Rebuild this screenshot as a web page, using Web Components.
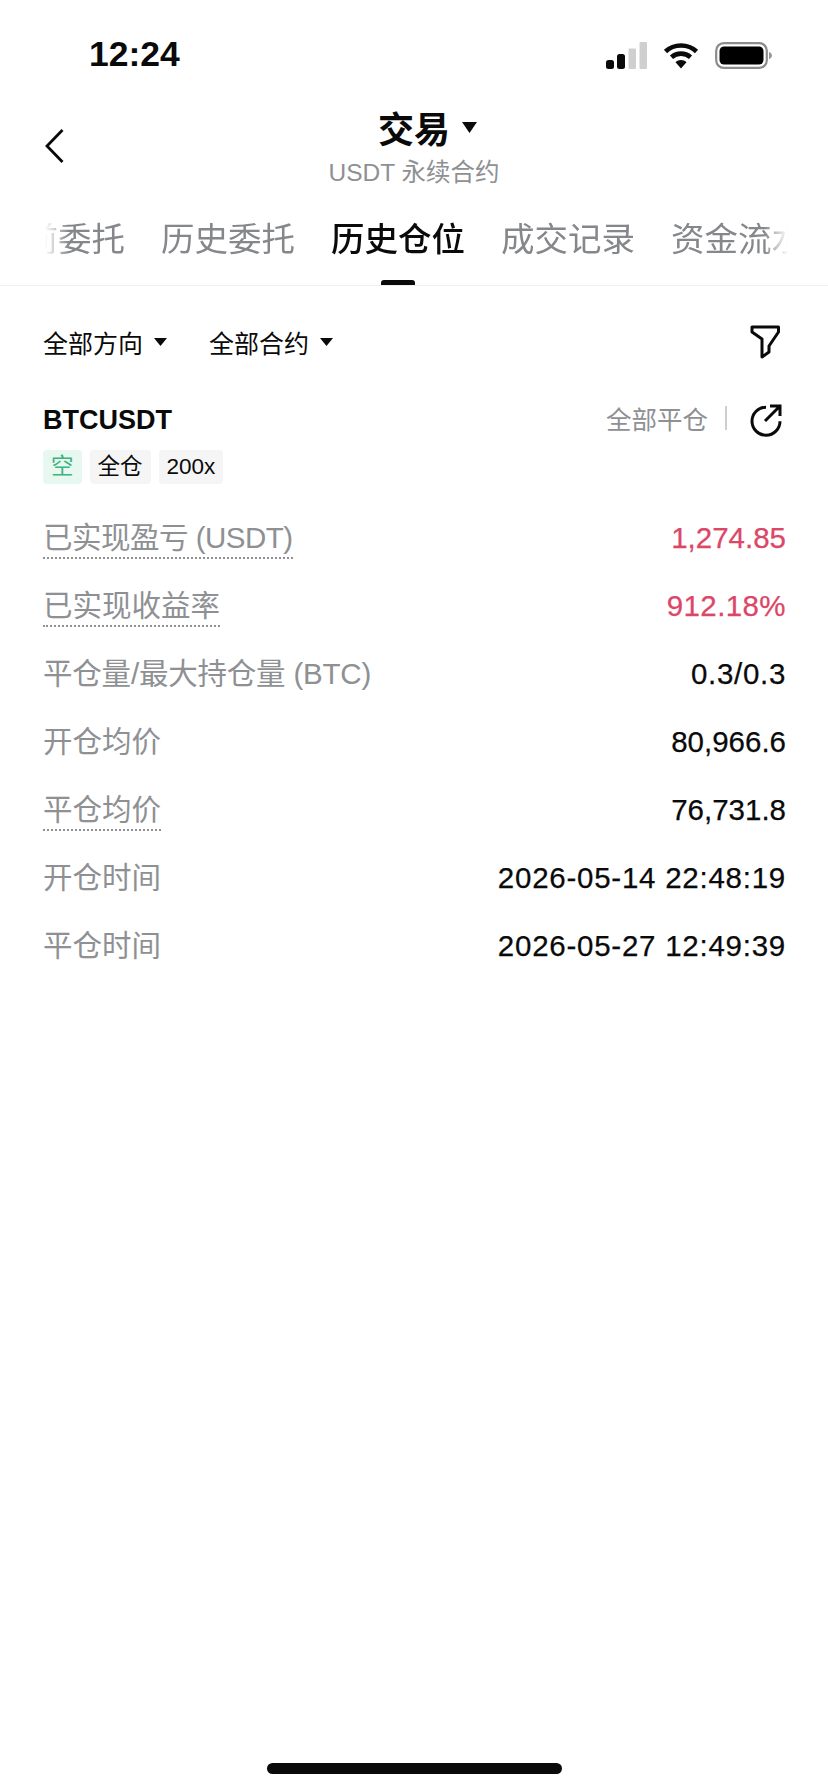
<!DOCTYPE html>
<html lang="zh-CN"><head><meta charset="utf-8"><title>历史仓位</title>
<style>
html,body{margin:0;padding:0;background:#fff}
body{font-family:"Liberation Sans","Noto Sans CJK SC",sans-serif;color:#0a0a0a}
</style></head><body>
<trade-screen>
  <status-bar time="12:24"></status-bar>
  <nav-header title="交易" subtitle="USDT 永续合约"></nav-header>
  <tab-strip>
    <tab-item>当前委托</tab-item><tab-item>历史委托</tab-item><tab-item active>历史仓位</tab-item><tab-item>成交记录</tab-item><tab-item>资金流水</tab-item>
  </tab-strip>
  <filter-bar>
    <filter-chip>全部方向</filter-chip><filter-chip>全部合约</filter-chip>
  </filter-bar>
  <position-card symbol="BTCUSDT">
    <pos-tag slot="tags" tone="green">空</pos-tag><pos-tag slot="tags">全仓</pos-tag><pos-tag slot="tags">200x</pos-tag>
    <data-row dotted tone="red" style="--ltrack:-.5px" label="已实现盈亏 (USDT)" value="1,274.85"></data-row>
    <data-row dotted tone="red" style="--vtrack:.4px" label="已实现收益率" value="912.18%"></data-row>
    <data-row style="--vtrack:.7px;--ltrack:-.2px" label="平仓量/最大持仓量 (BTC)" value="0.3/0.3"></data-row>
    <data-row label="开仓均价" value="80,966.6"></data-row>
    <data-row dotted label="平仓均价" value="76,731.8"></data-row>
    <data-row style="--vtrack:.75px" label="开仓时间" value="2026-05-14 22:48:19"></data-row>
    <data-row style="--vtrack:.75px" label="平仓时间" value="2026-05-27 12:49:39"></data-row>
  </position-card>
  <home-indicator></home-indicator>
</trade-screen>
<script>
function def(name, html, init){
  customElements.define(name, class extends HTMLElement{
    constructor(){super();this.attachShadow({mode:'open'}).innerHTML=html;}
    connectedCallback(){ if(init) init(this.shadowRoot,this); }
  });
}
const txt=(r,s,v)=>{r.querySelector(s).textContent=v};
def('trade-screen',`<style>:host{display:flex;flex-direction:column;width:828px;height:1792px;background:#fff;overflow:hidden}</style><slot></slot>`);
def('status-bar',`<style>
:host{display:flex;align-items:center;justify-content:space-between;height:110px;padding:0 56px 0 89px;box-sizing:border-box;flex:none}
.t{font:700 35.5px/1 "Liberation Sans",sans-serif;color:#0a0a0a}
.i{display:flex;align-items:center;gap:16px}
svg{display:block}
</style><span class="t"></span><div class="i">
<svg width="41" height="27" viewBox="0 0 41 27"><rect x="0" y="18" width="8" height="9" rx="2.5" fill="#0a0a0a"/><rect x="11" y="12" width="8" height="15" rx="2.5" fill="#0a0a0a"/><rect x="22.5" y="6.5" width="7.5" height="20.5" rx="1" fill="#cfcfcf"/><rect x="33.5" y="0" width="7.5" height="27" rx="1" fill="#cfcfcf"/></svg>
<svg width="36" height="27" viewBox="0 0 36 27"><path d="M2.5 9.5C11 1.5 25 1.5 33.5 9.5M8.5 15.2C13.8 10.4 22.2 10.4 27.5 15.2" fill="none" stroke="#0a0a0a" stroke-width="4.6"/><path d="M12.5 20.2C15.5 17.4 20.5 17.4 23.5 20.2L18 26.5Z" fill="#0a0a0a"/></svg>
<svg width="57" height="27" viewBox="0 0 57 27"><rect x="1.2" y="1.2" width="50.6" height="24.6" rx="7.5" fill="none" stroke="#8c8c8c" stroke-width="2.2"/><rect x="4.5" y="4.5" width="44" height="18" rx="4.5" fill="#000"/><path d="M54 10C56 10.6 57 12 57 13.5S56 16.4 54 17Z" fill="#9a9a9a"/></svg>
</div>`,(r,h)=>txt(r,'.t',h.getAttribute('time')));
def('nav-header',`<style>
:host{display:grid;grid-template-columns:1fr auto 1fr;height:90px;padding:0 44px;box-sizing:border-box;flex:none;align-items:start}
.back{margin-top:18px;display:block}
.c{display:flex;flex-direction:column;align-items:center;grid-column:2;margin-top:-5px}
.tt{display:flex;align-items:center;height:44px;font:700 36px/44px "Noto Sans CJK SC",sans-serif;color:#0a0a0a;position:relative}
.tt svg{position:absolute;left:calc(100% + 12px);top:17px}
.s{font:24.5px/32px "Liberation Sans","Noto Sans CJK SC",sans-serif;color:#8e9093;margin-top:8px}
</style><svg class="back" width="22" height="36" viewBox="0 0 22 36"><path d="M18.5 2 3 18l15.5 16" fill="none" stroke="#0a0a0a" stroke-width="2.8"/></svg>
<div class="c"><div class="tt"><span class="a"></span><svg width="15" height="11" viewBox="0 0 15 11"><path d="M0 0H15L7.5 11Z" fill="#0a0a0a"/></svg></div><div class="s"></div></div>`,(r,h)=>{txt(r,'.a',h.getAttribute('title'));txt(r,'.s',h.getAttribute('subtitle'))});
def('tab-strip',`<style>
:host{display:block;height:85px;border-bottom:1px solid #efefef;box-sizing:content-box;flex:none;padding:0 38px 0 43px}
.v{overflow:hidden;height:85px;-webkit-mask-image:linear-gradient(90deg,transparent 2px,#000 26px,#000 calc(100% - 26px),transparent calc(100% - 2px));mask-image:linear-gradient(90deg,transparent 2px,#000 26px,#000 calc(100% - 26px),transparent calc(100% - 2px))}
.r{display:flex;gap:36px;margin-left:-52px;width:max-content;height:100%}
</style><div class="v"><div class="r"><slot></slot></div></div>`);
def('tab-item',`<style>
:host{display:flex;flex-direction:column;align-items:center;position:relative;font:400 33.5px/48px "Noto Sans CJK SC",sans-serif;color:#85878a;padding-top:13px;box-sizing:border-box;height:85px;white-space:nowrap}
:host([active]){color:#0a0a0a;font-weight:500}
:host([active])::after{content:"";position:absolute;left:50%;bottom:0;width:34px;height:5px;margin-left:-17px;border-radius:3px 3px 0 0;background:#0a0a0a}
</style><slot></slot>`);
def('filter-bar',`<style>
:host{display:flex;align-items:center;height:111px;padding:0 48px 0 43px;gap:42px;box-sizing:border-box;flex:none}
svg{margin-left:auto;display:block}
</style><slot></slot><svg width="30" height="34" viewBox="0 0 30 34"><path d="M2 2H28.5V7L19 21V27L12 32V14L2 7Z" fill="none" stroke="#0a0a0a" stroke-width="3" stroke-linejoin="round"/></svg>`);
def('filter-chip',`<style>
:host{display:flex;align-items:center;gap:11px;font:400 25px/34px "Noto Sans CJK SC",sans-serif;color:#0a0a0a}
</style><slot></slot><svg width="13" height="8" viewBox="0 0 13 8"><path d="M0 0H13L6.5 8Z" fill="#0a0a0a"/></svg>`);
def('position-card',`<style>
:host{display:block;flex:none;padding:0 42px 0 43px}
.h{display:flex;align-items:center;justify-content:space-between;height:46px;padding-right:3px}
.n{font:700 27px/1 "Liberation Sans",sans-serif;color:#0a0a0a}
.a{display:flex;align-items:center}
.cl{font:400 25.5px/34px "Noto Sans CJK SC",sans-serif;color:#8e9093;margin-bottom:4px}
.sep{width:2px;height:24px;background:#cfcfcf;margin:0 22px 4px 17px}
.tags{display:flex;gap:8px;margin-top:7px;height:34px;margin-bottom:21px}
</style><div class="h"><span class="n"></span><div class="a"><span class="cl">全部平仓</span><span class="sep"></span>
<svg width="34" height="34" viewBox="0 0 34 34"><path d="M17 4.2A14 14 0 1 0 31 18.2" fill="none" stroke="#0a0a0a" stroke-width="3"/><path d="M16 18 29.5 4.5M21 3H31V13" fill="none" stroke="#0a0a0a" stroke-width="3"/></svg></div></div>
<div class="tags"><slot name="tags"></slot></div><slot></slot>`,(r,h)=>txt(r,'.n',h.getAttribute('symbol')));
def('pos-tag',`<style>
:host{display:flex;align-items:center;justify-content:center;height:34px;padding:0 8px;min-width:22px;border-radius:4px;background:#f5f5f5;font:400 22.5px/34px "Liberation Sans","Noto Sans CJK SC",sans-serif;color:#0a0a0a}
:host([tone=green]){background:#e6f8ef;color:#3fb27f}
</style><slot></slot>`);
def('data-row',`<style>
:host{display:flex;align-items:center;justify-content:space-between;height:68px}
.l{font:400 29.5px/38px "Liberation Sans","Noto Sans CJK SC",sans-serif;color:#8e9093;border-bottom:2px dotted transparent;letter-spacing:var(--ltrack,0)}
:host([dotted]) .l{border-bottom-color:#8e9093}
.v{font:400 29.5px/38px "Liberation Sans",sans-serif;color:#0a0a0a;margin-bottom:2px;letter-spacing:var(--vtrack,0);-webkit-text-stroke:.25px currentColor}
:host([tone=red]) .v{color:#dc4768}
</style><span class="l"></span><span class="v"></span>`,(r,h)=>{txt(r,'.l',h.getAttribute('label'));txt(r,'.v',h.getAttribute('value'))});
def('home-indicator',`<style>
:host{display:block;width:295px;height:11px;border-radius:6px;background:#0a0a0a;margin:auto auto 18px;flex:none}
</style>`);
</script>
</body></html>
